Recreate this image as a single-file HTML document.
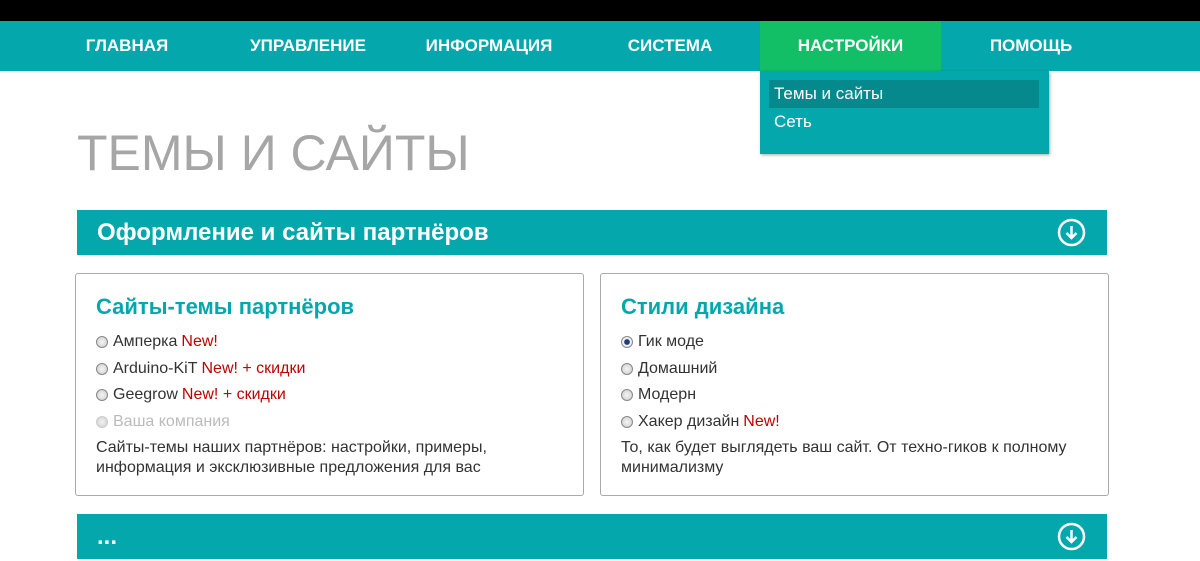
<!DOCTYPE html>
<html><head><meta charset="utf-8"><style>
*{margin:0;padding:0;box-sizing:border-box}
body{width:1200px;height:561px;overflow:hidden;background:#fff;font-family:"Liberation Sans",Arial,sans-serif;position:relative}
.top{position:absolute;left:0;top:0;width:1200px;height:21px;background:#000}
.nav{position:absolute;left:0;top:21px;width:1200px;height:50px;background:#04a8ac}
.nav a{position:absolute;top:0;height:50px;line-height:50px;color:#fff;font-weight:bold;font-size:17px;text-align:center}
.nav a.act{background:#13bf66}
.dd{position:absolute;left:760px;top:71px;width:289px;height:83px;background:#04a8ac;box-shadow:1px 1px 3px rgba(0,0,0,.35)}
.dd div{position:absolute;left:9px;width:270px;height:28px;line-height:28px;padding-left:5px;color:#fff;font-size:17px}
h1{position:absolute;left:77px;top:124px;font-size:50px;font-weight:normal;color:#a6a6a6}
.bar{position:absolute;left:77px;width:1030px;height:45px;background:#04a8ac;color:#fff;font-weight:bold;font-size:24px;line-height:45px;padding-left:20px}
.bar svg{position:absolute;right:21px;top:8px}
.box{position:absolute;top:273px;height:223px;border:1px solid #aaa;border-radius:3px;padding:20px 20px}
.box h2{color:#04a8ac;font-size:22px;margin-bottom:9px;line-height:26px}
.r{font-size:16px;color:#333;height:26.5px;line-height:26.5px;display:flex;align-items:center}
.r i{display:inline-block;width:12px;height:12px;border-radius:50%;border:1px solid #888;background:radial-gradient(#f4f4f4,#ccc);margin-right:5px}
.r i.on{background:radial-gradient(#1c3d78 35%,#eee 45%)}
.r b{font-weight:normal;color:#c00000;margin-left:4px}
.r.dis{color:#bbb}.r.dis i{border-color:#ccc}
.p{font-size:16px;color:#333;line-height:20px;margin-top:3px;white-space:nowrap}
</style></head><body>
<div class="top"></div>
<div class="nav">
<a style="left:62px;width:130px">ГЛАВНАЯ</a>
<a style="left:238px;width:140px">УПРАВЛЕНИЕ</a>
<a style="left:415px;width:148px">ИНФОРМАЦИЯ</a>
<a style="left:610px;width:120px">СИСТЕМА</a>
<a class="act" style="left:760px;width:181px">НАСТРОЙКИ</a>
<a style="left:970px;width:122px">ПОМОЩЬ</a>
</div>
<div class="dd"><div style="top:9px;background:#05898d">Темы и сайты</div><div style="top:37px">Сеть</div></div>
<h1>ТЕМЫ И САЙТЫ</h1>
<div class="bar" style="top:210px">Оформление и сайты партнёров<svg width="29" height="29" viewBox="0 0 29 29"><circle cx="14.5" cy="14.5" r="12.5" fill="none" stroke="#fff" stroke-width="2.5"/><path d="M14.5 8v12M9.5 15l5 5 5-5" fill="none" stroke="#fff" stroke-width="2.5"/></svg></div>
<div class="box" style="left:75px;width:509px">
<h2>Сайты-темы партнёров</h2>
<div class="r"><i></i>Амперка<b>New!</b></div>
<div class="r"><i></i>Arduino-KiT<b>New! + скидки</b></div>
<div class="r"><i></i>Geegrow<b>New! + скидки</b></div>
<div class="r dis"><i></i>Ваша компания</div>
<div class="p">Сайты-темы наших партнёров: настройки, примеры,<br>информация и эксклюзивные предложения для вас</div>
</div>
<div class="box" style="left:600px;width:509px">
<h2>Стили дизайна</h2>
<div class="r"><i class="on"></i>Гик моде</div>
<div class="r"><i></i>Домашний</div>
<div class="r"><i></i>Модерн</div>
<div class="r"><i></i>Хакер дизайн<b>New!</b></div>
<div class="p">То, как будет выглядеть ваш сайт. От техно-гиков к полному<br>минимализму</div>
</div>
<div class="bar" style="top:514px">...<svg width="29" height="29" viewBox="0 0 29 29"><circle cx="14.5" cy="14.5" r="12.5" fill="none" stroke="#fff" stroke-width="2.5"/><path d="M14.5 8v12M9.5 15l5 5 5-5" fill="none" stroke="#fff" stroke-width="2.5"/></svg></div>
</body></html>
